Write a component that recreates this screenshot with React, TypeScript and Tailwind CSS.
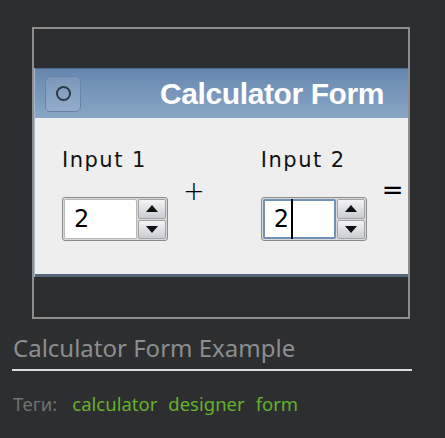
import React from 'react';

function Spinner({ focused, value }: { focused?: boolean; value: string }) {
  return (
    <div className="flex h-[44px] rounded-[3px] border border-[#8c8c8c] bg-[#d9d9d9] p-px">
      <div
        className={
          focused
            ? 'flex w-[73px] items-center rounded-[2px] border-2 border-[#7391b5] bg-white pl-[9px]'
            : 'flex w-[73px] items-center rounded-[2px] border border-[#b9b9b9] bg-white pl-[9px]'
        }
      >
        <span className="font-['DejaVu_Sans',sans-serif] text-[24px] leading-none tracking-[1px] text-black">
          {value}
        </span>
        {focused && <span className="ml-[1px] h-[40px] w-[2px] bg-black" />}
      </div>
      <div className="ml-px flex flex-1 flex-col gap-px">
        <div className="flex flex-1 items-center justify-center rounded-[2px] border border-[#a3a3a3] bg-gradient-to-b from-[#f4f4f6] to-[#c9ccd2]">
          <svg width="12" height="7" viewBox="0 0 12 7">
            <path d="M6 0 L12 7 L0 7 Z" fill="#111" />
          </svg>
        </div>
        <div className="flex flex-1 items-center justify-center rounded-[2px] border border-[#a3a3a3] bg-gradient-to-b from-[#f4f4f6] to-[#c9ccd2]">
          <svg width="12" height="7" viewBox="0 0 12 7">
            <path d="M0 0 L12 0 L6 7 Z" fill="#111" />
          </svg>
        </div>
      </div>
    </div>
  );
}

function Field({ label, focused }: { label: string; focused?: boolean }) {
  return (
    <div className="flex w-[106px] flex-col">
      <div className="font-['DejaVu_Sans',sans-serif] text-[21px] leading-[24px] tracking-[1.5px] text-[#111]">
        {label}
      </div>
      <div className="mt-[25px]">
        <Spinner value="2" focused={focused} />
      </div>
    </div>
  );
}

export default function App() {
  return (
    <div className="h-[438px] w-[445px] overflow-hidden bg-[#2d2e30] pt-[27px]">
      {/* preview frame */}
      <div className="ml-[32px] h-[292px] w-[378px] overflow-hidden border-2 border-[#8e8e8e] pt-[39px]">
        <div className="w-[420px] border-l border-[#a7b8cb]">
          {/* title bar */}
          <div className="flex h-[50px] items-center border-t border-[#4b6a90] bg-gradient-to-b from-[#6787b0] to-[#89a6c5]">
            <div className="ml-[10px] flex h-[36px] w-[36px] items-center justify-center rounded-[5px] border border-[#6784a8] bg-gradient-to-b from-[#7a97bb] to-[#93adca]">
              <div className="h-[15px] w-[15px] rounded-full border-2 border-[#2e3947]" />
            </div>
            <div className="ml-[79px] font-['Liberation_Sans',Arial,sans-serif] text-[30px] font-bold leading-none tracking-[-0.4px] text-white">
              Calculator Form
            </div>
          </div>
          {/* content */}
          <div className="flex h-[156px] bg-[#eeeeee] pl-[27px] pt-[30px]">
            <Field label="Input 1" />
            <div className="ml-[15px] mt-[30px] font-['DejaVu_Sans',sans-serif] text-[26px] font-light leading-none text-black">
              +
            </div>
            <div className="ml-[56px]">
              <Field label="Input 2" focused />
            </div>
            <div className="ml-[15px] mt-[29px] font-['DejaVu_Sans',sans-serif] text-[26px] leading-none text-black">
              =
            </div>
          </div>
          <div className="h-[3px] bg-[#55657a]" />
        </div>
      </div>

      {/* caption */}
      <div className="ml-[12px] mt-[13px] w-[400px] border-b-2 border-[#dcdcdc] pb-[5px]">
        <div className="pl-px font-['Noto_Sans',sans-serif] text-[24px] leading-[32px] text-[#8c8e90]">
          Calculator Form Example
        </div>
      </div>
      <div className="ml-[13px] mt-[21px] flex items-center font-['Noto_Sans',sans-serif] text-[18.5px] leading-[24px]">
        <span className="text-[#707274]">Теги:</span>
        <div className="ml-[15px] flex gap-[11px] text-[#64b22c]">
          <span>calculator</span>
          <span>designer</span>
          <span>form</span>
        </div>
      </div>
    </div>
  );
}
